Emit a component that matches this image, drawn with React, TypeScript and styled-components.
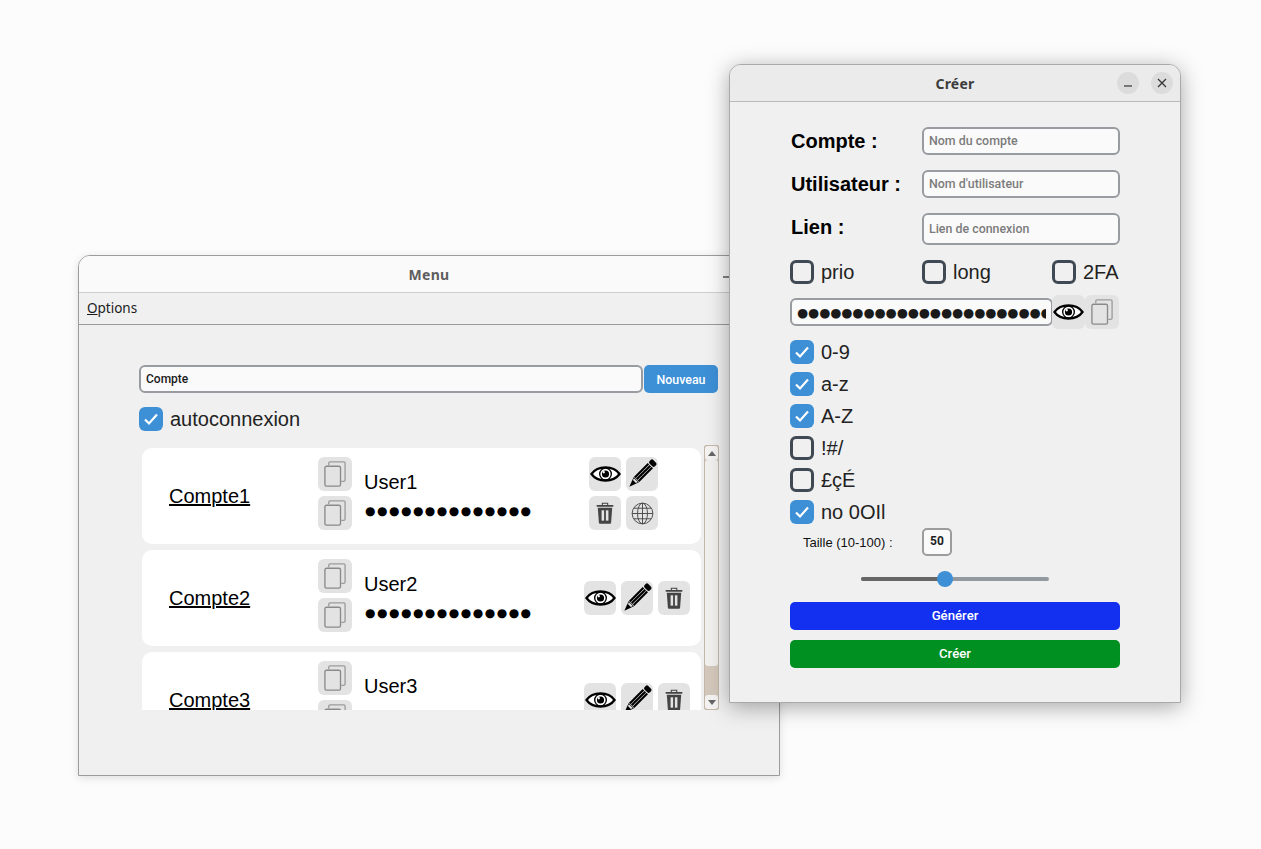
import React from "react";
import styled, { createGlobalStyle } from "styled-components";

const GlobalStyle = createGlobalStyle`
  html, body {
    margin: 0;
    padding: 0;
    background: #fcfcfc;
    font-family: "Liberation Sans", Arial, sans-serif;
  }
  * { box-sizing: border-box; }
`;

// Desktop and windows
const Desktop = styled.div`
  position: relative;
  width: 1261px;
  height: 849px;
  overflow: hidden;
  background: #fcfcfc;
`;

const Window = styled.section<{ $left: number; $top: number; $width: number; $height: number; $active?: boolean }>`
  position: absolute;
  left: ${(p) => p.$left}px;
  top: ${(p) => p.$top}px;
  width: ${(p) => p.$width}px;
  height: ${(p) => p.$height}px;
  display: flex;
  flex-direction: column;
  background: #f0f0f0;
  border: 1px solid ${(p) => (p.$active ? "#a9a9a9" : "#9c9c9c")};
  border-radius: 12px 12px 0 0;
  box-shadow: ${(p) => (p.$active ? "0 4px 22px rgba(0, 0, 0, 0.34)" : "0 2px 8px rgba(0, 0, 0, 0.12)")};
`;

const TitleBar = styled.header<{ $active?: boolean }>`
  position: relative;
  flex: none;
  height: 37px;
  display: flex;
  align-items: center;
  justify-content: center;
  background: ${(p) => (p.$active ? "#ebebeb" : "#fafafa")};
  border-bottom: 1px solid ${(p) => (p.$active ? "#b9b9b9" : "#cfcfcf")};
  border-radius: 11px 11px 0 0;
  font-family: "Noto Sans", sans-serif;
  font-size: 14px;
  font-weight: 700;
  letter-spacing: 0.25px;
  color: ${(p) => (p.$active ? "#3d3d3d" : "#5e5e5e")};
`;

const TitleButtons = styled.div<{ $right: number }>`
  position: absolute;
  top: 7px;
  right: ${(p) => p.$right}px;
  display: flex;
  gap: 12px;
`;

const TitleButton = styled.span<{ $flat?: boolean }>`
  width: 22px;
  height: 22px;
  display: flex;
  align-items: center;
  justify-content: center;
  border-radius: 50%;
  background: ${(p) => (p.$flat ? "transparent" : "#dcdcdc")};
  color: #333;
`;

const MenuBar = styled.nav`
  flex: none;
  height: 32px;
  padding: 5px 8px 0;
  border-bottom: 1px solid #9a9a9a;
  font-family: "Noto Sans", sans-serif;
  font-size: 13.5px;
  line-height: 20px;
  color: #1c1c1c;
`;

// Shared controls
const TextField = styled.input<{ $height?: number; $dots?: boolean }>`
  width: 100%;
  height: ${(p) => p.$height ?? 28}px;
  padding: 0 5px;
  border: 2px solid #989ca1;
  border-radius: 6px;
  background: #fafafa;
  outline: none;
  font-family: ${(p) => (p.$dots ? '"DejaVu Sans", sans-serif' : "Roboto, sans-serif")};
  font-size: ${(p) => (p.$dots ? "12.7px" : "12px")};
  font-weight: ${(p) => (p.$dots ? 400 : 500)};
  color: #1a1a1a;
  &::placeholder {
    font-size: 12.4px;
    font-weight: 500;
    color: #7c7c7c;
    opacity: 1;
  }
`;

const IconButton = styled.button<{ $width?: number }>`
  flex: none;
  width: ${(p) => p.$width ?? 32}px;
  height: 34px;
  padding: 0;
  display: flex;
  align-items: center;
  justify-content: center;
  border: none;
  border-radius: 6px;
  background: #e3e3e3;
`;

const CheckRow = styled.label`
  display: flex;
  align-items: center;
  gap: 7px;
  height: 24px;
  font-size: 20px;
  color: #222;
`;

const CheckBox = styled.span<{ $on?: boolean }>`
  flex: none;
  width: 24px;
  height: 24px;
  display: flex;
  align-items: center;
  justify-content: center;
  border-radius: 6px;
  background: ${(p) => (p.$on ? "#3d8fd6" : "transparent")};
  border: ${(p) => (p.$on ? "none" : "3px solid #414a54")};
`;

const ActionButton = styled.button<{ $color: string; $small?: boolean }>`
  flex: none;
  width: ${(p) => (p.$small ? "74px" : "auto")};
  height: 28px;
  padding: 0 0 ${(p) => (p.$small ? 0 : 2)}px;
  border: none;
  border-radius: 5px;
  background: ${(p) => p.$color};
  color: #fff;
  font-family: Roboto, sans-serif;
  font-size: ${(p) => (p.$small ? "12.4px" : "13.2px")};
  font-weight: 500;
`;

// Menu window
const MenuBody = styled.div`
  flex: 1;
  padding: 40px 60px 0;
  display: flex;
  flex-direction: column;
  align-items: flex-start;
  gap: 14px;
`;

const SearchRow = styled.div`
  width: 579px;
  display: flex;
  gap: 1px;
`;

const AccountsBox = styled.div`
  width: 580px;
  height: 265px;
  display: flex;
  justify-content: space-between;
`;

const AccountList = styled.div`
  width: 562px;
  padding: 3px 0 0 3px;
  display: flex;
  flex-direction: column;
  gap: 6px;
  overflow: hidden;
`;

const Card = styled.article`
  flex: none;
  width: 559px;
  height: 96px;
  padding: 9px 0 0 27px;
  display: flex;
  background: #fff;
  border-radius: 10px;
`;

const AccountName = styled.a`
  width: 149px;
  align-self: center;
  margin-top: -9px;
  font-size: 20px;
  color: #000;
  text-decoration: underline;
`;

const CopyColumn = styled.div`
  display: flex;
  flex-direction: column;
  gap: 5px;
`;

const Details = styled.div`
  width: 200px;
  margin-left: 12px;
  padding-top: 13px;
`;

const UserName = styled.div`
  font-size: 20px;
  line-height: 24px;
  color: #000;
`;

const HiddenPassword = styled.div`
  margin-top: 5px;
  margin-left: 1px;
  font-family: "DejaVu Sans", sans-serif;
  font-size: 12px;
  letter-spacing: 1.5px;
  line-height: 24px;
  color: #000;
  white-space: nowrap;
`;

const ActionGrid = styled.div<{ $twoRows?: boolean }>`
  margin-left: ${(p) => (p.$twoRows ? 25 : 20)}px;
  width: ${(p) => (p.$twoRows ? 69 : 106)}px;
  height: ${(p) => (p.$twoRows ? 73 : 34)}px;
  margin-top: ${(p) => (p.$twoRows ? 0 : 22)}px;
  display: flex;
  flex-wrap: wrap;
  gap: 5px;
`;

const ScrollBar = styled.div`
  width: 15px;
  height: 265px;
  display: flex;
  flex-direction: column;
  background: #d3c8bb;
  border: 1px solid #c4b8aa;
  border-radius: 2px;
`;

const ScrollArrow = styled.div<{ $down?: boolean }>`
  flex: none;
  height: 14px;
  display: flex;
  align-items: center;
  justify-content: center;
  background: #f4f3f1;
  border-radius: 3px;
  &::after {
    content: "";
    border-left: 4px solid transparent;
    border-right: 4px solid transparent;
    border-${(p) => (p.$down ? "top" : "bottom")}: 5px solid #666;
  }
`;

const ScrollThumb = styled.div`
  flex: none;
  height: 206px;
  background: #f1f0ee;
  border-radius: 3px;
`;

const ScrollTrack = styled.div`
  flex: 1;
`;

// Create window
const CreateBody = styled.div`
  flex: 1;
  padding: 25px 60px 0;
`;

const FieldGrid = styled.div`
  display: grid;
  grid-template-columns: 132px 198px;
  row-gap: 15px;
  align-items: center;
`;

const FieldLabel = styled.span<{ $raised?: boolean }>`
  font-size: 20px;
  font-weight: 700;
  color: #000;
  padding-left: 1px;
  padding-bottom: ${(p) => (p.$raised ? 4 : 0)}px;
`;

const OptionRow = styled.div`
  margin-top: 15px;
  display: grid;
  grid-template-columns: 132px 130px 68px;
`;

const PasswordRow = styled.div`
  margin-top: 11px;
  display: flex;
  align-items: center;
`;

const PasswordField = styled.div`
  flex: none;
  width: 263px;
  margin-right: -1px;
`;

const CharsetList = styled.div`
  margin-top: 11px;
  display: flex;
  flex-direction: column;
  gap: 8px;
`;

const SizeRow = styled.div`
  margin-top: 4px;
  padding-left: 13px;
  display: flex;
  align-items: center;
  font-size: 13px;
  color: #111;
`;

const SizeLabel = styled.span`
  width: 119px;
`;

const SizeField = styled.input`
  width: 30px;
  height: 28px;
  padding: 0 0 2px;
  border: 2px solid #9c9c9c;
  border-radius: 5px;
  background: #fafafa;
  outline: none;
  text-align: center;
  font-family: Roboto, sans-serif;
  font-size: 12px;
  font-weight: 700;
  color: #222;
`;

const Slider = styled.div`
  position: relative;
  width: 188px;
  height: 4px;
  margin: 21px 0 0 71px;
  background: #929aa1;
  border-radius: 2px;
`;

const SliderFill = styled.div`
  height: 100%;
  background: #666;
  border-radius: 2px;
`;

const SliderThumb = styled.div`
  position: absolute;
  top: -6px;
  width: 16px;
  height: 16px;
  margin-left: -8px;
  border-radius: 50%;
  background: #3d8fd6;
`;

const ButtonStack = styled.div`
  margin-top: 21px;
  display: flex;
  flex-direction: column;
  gap: 10px;
`;

// Icons
const EyeIcon = () => (
  <svg width="31" height="22" viewBox="0 0 32 22">
    <path d="M1.5 11C8 2 24 2 30.5 11C24 20 8 20 1.5 11Z" fill="#fff" stroke="#000" strokeWidth="2.3" />
    <circle cx="16" cy="11" r="6" fill="none" stroke="#000" strokeWidth="1.4" />
    <circle cx="16" cy="11" r="3.7" fill="#000" />
    <circle cx="14.2" cy="9.2" r="1.2" fill="#fff" />
  </svg>
);

const PencilIcon = () => (
  <svg width="34" height="34" viewBox="0 0 34 34">
    <g transform="rotate(45 17 17)">
      <rect x="13" y="-2" width="8" height="5.5" rx="2" fill="#000" />
      <rect x="13" y="4.5" width="2.3" height="20.5" fill="#000" />
      <rect x="15.85" y="4.5" width="2.3" height="20.5" fill="#000" />
      <rect x="18.7" y="4.5" width="2.3" height="20.5" fill="#000" />
      <path d="M13 25.5L21 25.5L17 36Z" fill="#000" />
      <path d="M14 26.2L20 26.2L19.2 28.4L14.8 28.4Z" fill="#e3e3e3" />
    </g>
  </svg>
);

const TrashIcon = () => (
  <svg width="18" height="22" viewBox="0 0 20 24">
    <path d="M7 3V1.2H13V3" fill="none" stroke="#444" strokeWidth="1.2" />
    <rect x="0.5" y="3" width="19" height="2" rx="1" fill="#444" />
    <path d="M2 6.2H18L16.8 22.5C16.7 23.4 16.2 24 15.2 24H4.8C3.8 24 3.3 23.4 3.2 22.5Z" fill="#444" />
    <rect x="6.2" y="9" width="2.8" height="11.5" fill="#e3e3e3" />
    <rect x="11" y="9" width="2.8" height="11.5" fill="#e3e3e3" />
  </svg>
);

const GlobeIcon = () => (
  <svg width="23" height="23" viewBox="0 0 24 24" fill="none" stroke="#4a4a4a" strokeWidth="1">
    <circle cx="12" cy="12" r="10.8" />
    <ellipse cx="12" cy="12" rx="5.2" ry="10.8" />
    <path d="M12 1.2V22.8M1.2 12H22.8M3 6.5H21M3 17.5H21" />
  </svg>
);

const CopyIcon = () => (
  <svg width="22" height="26" viewBox="0 0 21 25" fill="none" stroke="#8a8a8a" strokeWidth="1.3">
    <rect x="0.8" y="5" width="15" height="19.2" rx="1.5" />
    <path d="M4.5 4.2V2.2C4.5 1.4 5 0.8 5.8 0.8H18.8C19.6 0.8 20.2 1.4 20.2 2.2V18.2C20.2 19 19.6 19.6 18.8 19.6H16.5" stroke="#9c9c9c" />
  </svg>
);

const CheckMark = () => (
  <svg width="16" height="14" viewBox="0 0 16 14">
    <path d="M2 7.5L6 11.5L14 2.5" fill="none" stroke="#fff" strokeWidth="2.2" />
  </svg>
);

const MinimizeGlyph = () => (
  <svg width="10" height="10" viewBox="0 0 10 10">
    <path d="M1 8H9" stroke="#333" strokeWidth="1.2" />
  </svg>
);

const CloseGlyph = () => (
  <svg width="10" height="10" viewBox="0 0 10 10">
    <path d="M1 1L9 9M9 1L1 9" stroke="#333" strokeWidth="1.2" />
  </svg>
);

const Option: React.FC<{ label: string; on?: boolean }> = ({ label, on }) => (
  <CheckRow>
    <CheckBox $on={on}>{on && <CheckMark />}</CheckBox>
    {label}
  </CheckRow>
);

const accounts = [
  { name: "Compte1", user: "User1", link: true },
  { name: "Compte2", user: "User2", link: false },
  { name: "Compte3", user: "User3", link: false },
];

const charsets = [
  { label: "0-9", on: true },
  { label: "a-z", on: true },
  { label: "A-Z", on: true },
  { label: "!#/", on: false },
  { label: "£çÉ", on: false },
  { label: "no 0OIl", on: true },
];

const size = 50;
const sizePercent = ((size - 10) / 90) * 100;

const App: React.FC = () => {
  return (
    <Desktop>
      <GlobalStyle />

      <Window $left={78} $top={255} $width={702} $height={521}>
        <TitleBar>
          Menu
          <TitleButtons $right={41}>
            <TitleButton $flat>
              <MinimizeGlyph />
            </TitleButton>
          </TitleButtons>
        </TitleBar>
        <MenuBar>
          <u>O</u>ptions
        </MenuBar>
        <MenuBody>
          <SearchRow>
            <TextField readOnly value="Compte" />
            <ActionButton $color="#3d8fd6" $small>
              Nouveau
            </ActionButton>
          </SearchRow>
          <Option label="autoconnexion" on />
          <AccountsBox>
            <AccountList>
              {accounts.map((account) => (
                <Card key={account.name}>
                  <AccountName>{account.name}</AccountName>
                  <CopyColumn>
                    <IconButton $width={34}>
                      <CopyIcon />
                    </IconButton>
                    <IconButton $width={34}>
                      <CopyIcon />
                    </IconButton>
                  </CopyColumn>
                  <Details>
                    <UserName>{account.user}</UserName>
                    <HiddenPassword>{"●".repeat(14)}</HiddenPassword>
                  </Details>
                  <ActionGrid $twoRows={account.link}>
                    <IconButton>
                      <EyeIcon />
                    </IconButton>
                    <IconButton>
                      <PencilIcon />
                    </IconButton>
                    <IconButton>
                      <TrashIcon />
                    </IconButton>
                    {account.link && (
                      <IconButton>
                        <GlobeIcon />
                      </IconButton>
                    )}
                  </ActionGrid>
                </Card>
              ))}
            </AccountList>
            <ScrollBar>
              <ScrollArrow />
              <ScrollThumb />
              <ScrollTrack />
              <ScrollArrow $down />
            </ScrollBar>
          </AccountsBox>
        </MenuBody>
      </Window>

      <Window $left={729} $top={64} $width={452} $height={639} $active>
        <TitleBar $active>
          Créer
          <TitleButtons $right={7}>
            <TitleButton>
              <MinimizeGlyph />
            </TitleButton>
            <TitleButton>
              <CloseGlyph />
            </TitleButton>
          </TitleButtons>
        </TitleBar>
        <CreateBody>
          <FieldGrid>
            <FieldLabel>Compte :</FieldLabel>
            <TextField placeholder="Nom du compte" />
            <FieldLabel>Utilisateur :</FieldLabel>
            <TextField placeholder="Nom d'utilisateur" />
            <FieldLabel $raised>Lien :</FieldLabel>
            <TextField $height={32} placeholder="Lien de connexion" />
          </FieldGrid>
          <OptionRow>
            <Option label="prio" />
            <Option label="long" />
            <Option label="2FA" />
          </OptionRow>
          <PasswordRow>
            <PasswordField>
              <TextField $dots readOnly value={"●".repeat(50)} />
            </PasswordField>
            <IconButton $width={33}>
              <EyeIcon />
            </IconButton>
            <IconButton $width={34}>
              <CopyIcon />
            </IconButton>
          </PasswordRow>
          <CharsetList>
            {charsets.map((charset) => (
              <Option key={charset.label} label={charset.label} on={charset.on} />
            ))}
          </CharsetList>
          <SizeRow>
            <SizeLabel>Taille (10-100) :</SizeLabel>
            <SizeField readOnly value={size} />
          </SizeRow>
          <Slider>
            <SliderFill style={{ width: `${sizePercent}%` }} />
            <SliderThumb style={{ left: `${sizePercent}%` }} />
          </Slider>
          <ButtonStack>
            <ActionButton $color="#132ff0">Générer</ActionButton>
            <ActionButton $color="#009022">Créer</ActionButton>
          </ButtonStack>
        </CreateBody>
      </Window>
    </Desktop>
  );
};

export default App;
